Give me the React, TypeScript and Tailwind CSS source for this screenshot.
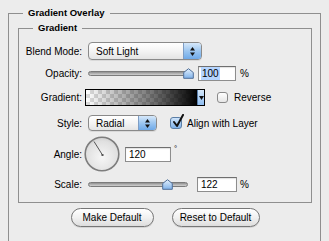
import React from "react";

function Select({ w, h, label }: { w: string; h: string; label: string }) {
  return (
    <div
      className={`${w} ${h} flex items-stretch rounded-[4px] border border-[#8a8a8a] bg-[linear-gradient(to_bottom,#ffffff,#f4f4f4_50%,#e4e4e4)] overflow-hidden shadow-[0_1px_0_rgba(0,0,0,0.08)]`}
    >
      <div className="flex-1 flex items-center pl-[7px] text-[10px]">{label}</div>
      <div className="w-[18px] flex items-center justify-center border-l border-[#7e9dc4] bg-[linear-gradient(to_bottom,#d6e8fa,#9cc6f0_50%,#6ea9e8)]">
        <svg width="7" height="11" viewBox="0 0 7 11">
          <path d="M3.5 1 L6 4.5 L1 4.5 Z" fill="#111" />
          <path d="M3.5 10 L6 6.5 L1 6.5 Z" fill="#111" />
        </svg>
      </div>
    </div>
  );
}

function Slider({ pos }: { pos: number }) {
  return (
    <div className="relative w-[100px] h-[15px] flex items-center">
      <div className="w-full h-[5px] rounded-full border border-[#7b7b7b] bg-[linear-gradient(to_bottom,#8f8f8f,#b9b9b9_60%,#d0d0d0)]" />
      <svg
        className="absolute top-[2px]"
        style={{ left: pos }}
        width="11"
        height="11"
        viewBox="0 0 11 11"
      >
        <defs>
          <linearGradient id={`th${pos}`} x1="0" y1="0" x2="0" y2="1">
            <stop offset="0" stopColor="#e4f0fc" />
            <stop offset="1" stopColor="#7fb2ea" />
          </linearGradient>
        </defs>
        <path
          d="M5.5 0.7 L10.3 4.5 L10.3 10.3 L0.7 10.3 L0.7 4.5 Z"
          fill={`url(#th${pos})`}
          stroke="#4f6f99"
          strokeWidth="1"
          strokeLinejoin="round"
        />
      </svg>
    </div>
  );
}

function NumBox({ w, value, selected }: { w: string; value: string; selected?: boolean }) {
  return (
    <div
      className={`${w} h-[15px] flex items-center bg-white border border-[#8d8d8d] border-t-[#6f6f6f] pl-[2px] text-[10px] leading-[13px] shadow-[inset_0_1px_1px_rgba(0,0,0,0.12)]`}
    >
      <span className={selected ? "bg-[#b5d5ff] px-[1px]" : "px-[1px]"}>{value}</span>
    </div>
  );
}

function Label({ children }: { children: React.ReactNode }) {
  return <div className="w-[63px] shrink-0 text-right text-[10px]">{children}</div>;
}

export default function App() {
  return (
    <div className="w-[329px] h-[241px] overflow-hidden bg-[#ececec] px-2 pt-[7px] font-['Liberation_Sans',Arial,sans-serif] text-[10px] text-black">
      <fieldset className="h-[300px] border border-[#8f8f8f] p-0 m-0">
        <legend className="ml-[14px] px-[5px] font-bold text-[9.5px] leading-[12px]">
          Gradient Overlay
        </legend>
        <div className="pl-[9px] pr-[8px] pt-[3px]">
          <fieldset className="border border-[#8f8f8f] p-0 m-0">
            <legend className="ml-[14px] px-[5px] font-bold text-[9.5px] leading-[12px]">
              Gradient
            </legend>
            <div className="flex flex-col pb-[10px]">
              {/* Blend mode */}
              <div className="mt-[8px] h-[18px] flex items-center">
                <Label>Blend Mode:</Label>
                <div className="ml-[6px]">
                  <Select w="w-[114px]" h="h-[18px]" label="Soft Light" />
                </div>
              </div>
              {/* Opacity */}
              <div className="mt-[6px] h-[15px] flex items-center">
                <Label>Opacity:</Label>
                <div className="ml-[6px]">
                  <Slider pos={95} />
                </div>
                <div className="ml-[10px]">
                  <NumBox w="w-[38px]" value="100" selected />
                </div>
                <span className="ml-[4px]">%</span>
              </div>
              {/* Gradient */}
              <div className="mt-[8px] h-[17px] flex items-center">
                <Label>Gradient:</Label>
                <div className="ml-[3px] w-[120px] h-[17px] flex border border-black">
                  <div className="flex-1 bg-[conic-gradient(#dcdcdc_25%,#ffffff_0_50%,#dcdcdc_0_75%,#ffffff_0)] bg-[length:8px_8px]">
                    <div className="w-full h-full bg-[linear-gradient(to_right,rgba(0,0,0,0),rgba(0,0,0,0.55)_60%,#000)]" />
                  </div>
                  <div className="w-[7px] flex items-center justify-center border-l border-[#5a7ea8] bg-[linear-gradient(to_bottom,#d6e8fa,#8fbdf0)]">
                    <svg width="5" height="4" viewBox="0 0 5 4">
                      <path d="M0 0 L5 0 L2.5 4 Z" fill="#111" />
                    </svg>
                  </div>
                </div>
                <div className="ml-[12px] w-[11px] h-[11px] rounded-[3px] border border-[#8a8a8a] bg-[linear-gradient(to_bottom,#ffffff,#e6e6e6)]" />
                <span className="ml-[6px]">Reverse</span>
              </div>
              {/* Style */}
              <div className="mt-[9px] h-[16px] flex items-center">
                <Label>Style:</Label>
                <div className="ml-[6px]">
                  <Select w="w-[69px]" h="h-[16px]" label="Radial" />
                </div>
                <div className="relative ml-[13px] w-[12px] h-[12px] rounded-[3px] border border-[#5b7ea6] bg-[linear-gradient(to_bottom,#cfe4fa,#7fb2ea)]">
                  <svg
                    className="absolute left-[1px] top-[-4px]"
                    width="13"
                    height="14"
                    viewBox="0 0 13 14"
                  >
                    <path
                      d="M2 8 L5 12 L11 1"
                      fill="none"
                      stroke="#111"
                      strokeWidth="2"
                      strokeLinecap="round"
                      strokeLinejoin="round"
                    />
                  </svg>
                </div>
                <span className="ml-[5px]">Align with Layer</span>
              </div>
              {/* Angle */}
              <div className="mt-[5px] h-[36px] flex items-center">
                <Label>Angle:</Label>
                <div className="ml-[2px] w-[36px] h-[36px]">
                  <svg width="36" height="36" viewBox="0 0 36 36">
                    <defs>
                      <radialGradient id="dial" cx="0.5" cy="0.6" r="0.6">
                        <stop offset="0" stopColor="#f6f6f6" />
                        <stop offset="0.8" stopColor="#e0e0e0" />
                        <stop offset="1" stopColor="#cfcfcf" />
                      </radialGradient>
                    </defs>
                    <circle cx="18" cy="18" r="16.8" fill="url(#dial)" stroke="#7d7d7d" strokeWidth="1.6" />
                    <line x1="18.5" y1="19" x2="10" y2="5.5" stroke="#555" strokeWidth="1" />
                    <rect x="17.5" y="18" width="2" height="2" fill="#555" />
                  </svg>
                </div>
                <div className="ml-[5px]">
                  <NumBox w="w-[46px]" value="120" />
                </div>
                <span className="ml-[3px] self-start mt-[9px] text-[8px] leading-[8px]">°</span>
              </div>
              {/* Scale */}
              <div className="mt-[5px] h-[15px] flex items-center">
                <Label>Scale:</Label>
                <div className="ml-[6px]">
                  <Slider pos={74} />
                </div>
                <div className="ml-[9px]">
                  <NumBox w="w-[40px]" value="122" />
                </div>
                <span className="ml-[3px]">%</span>
              </div>
            </div>
          </fieldset>
          <div className="mt-[5px] flex justify-center gap-[18px]">
            <button className="w-[83px] h-[19px] rounded-full border border-[#767676] bg-[linear-gradient(to_bottom,#ffffff,#f1f1f1_50%,#dddddd)] text-[10px] shadow-[0_1px_0_rgba(0,0,0,0.1)]">
              Make Default
            </button>
            <button className="w-[88px] h-[19px] rounded-full border border-[#767676] bg-[linear-gradient(to_bottom,#ffffff,#f1f1f1_50%,#dddddd)] text-[10px] shadow-[0_1px_0_rgba(0,0,0,0.1)]">
              Reset to Default
            </button>
          </div>
        </div>
      </fieldset>
    </div>
  );
}
